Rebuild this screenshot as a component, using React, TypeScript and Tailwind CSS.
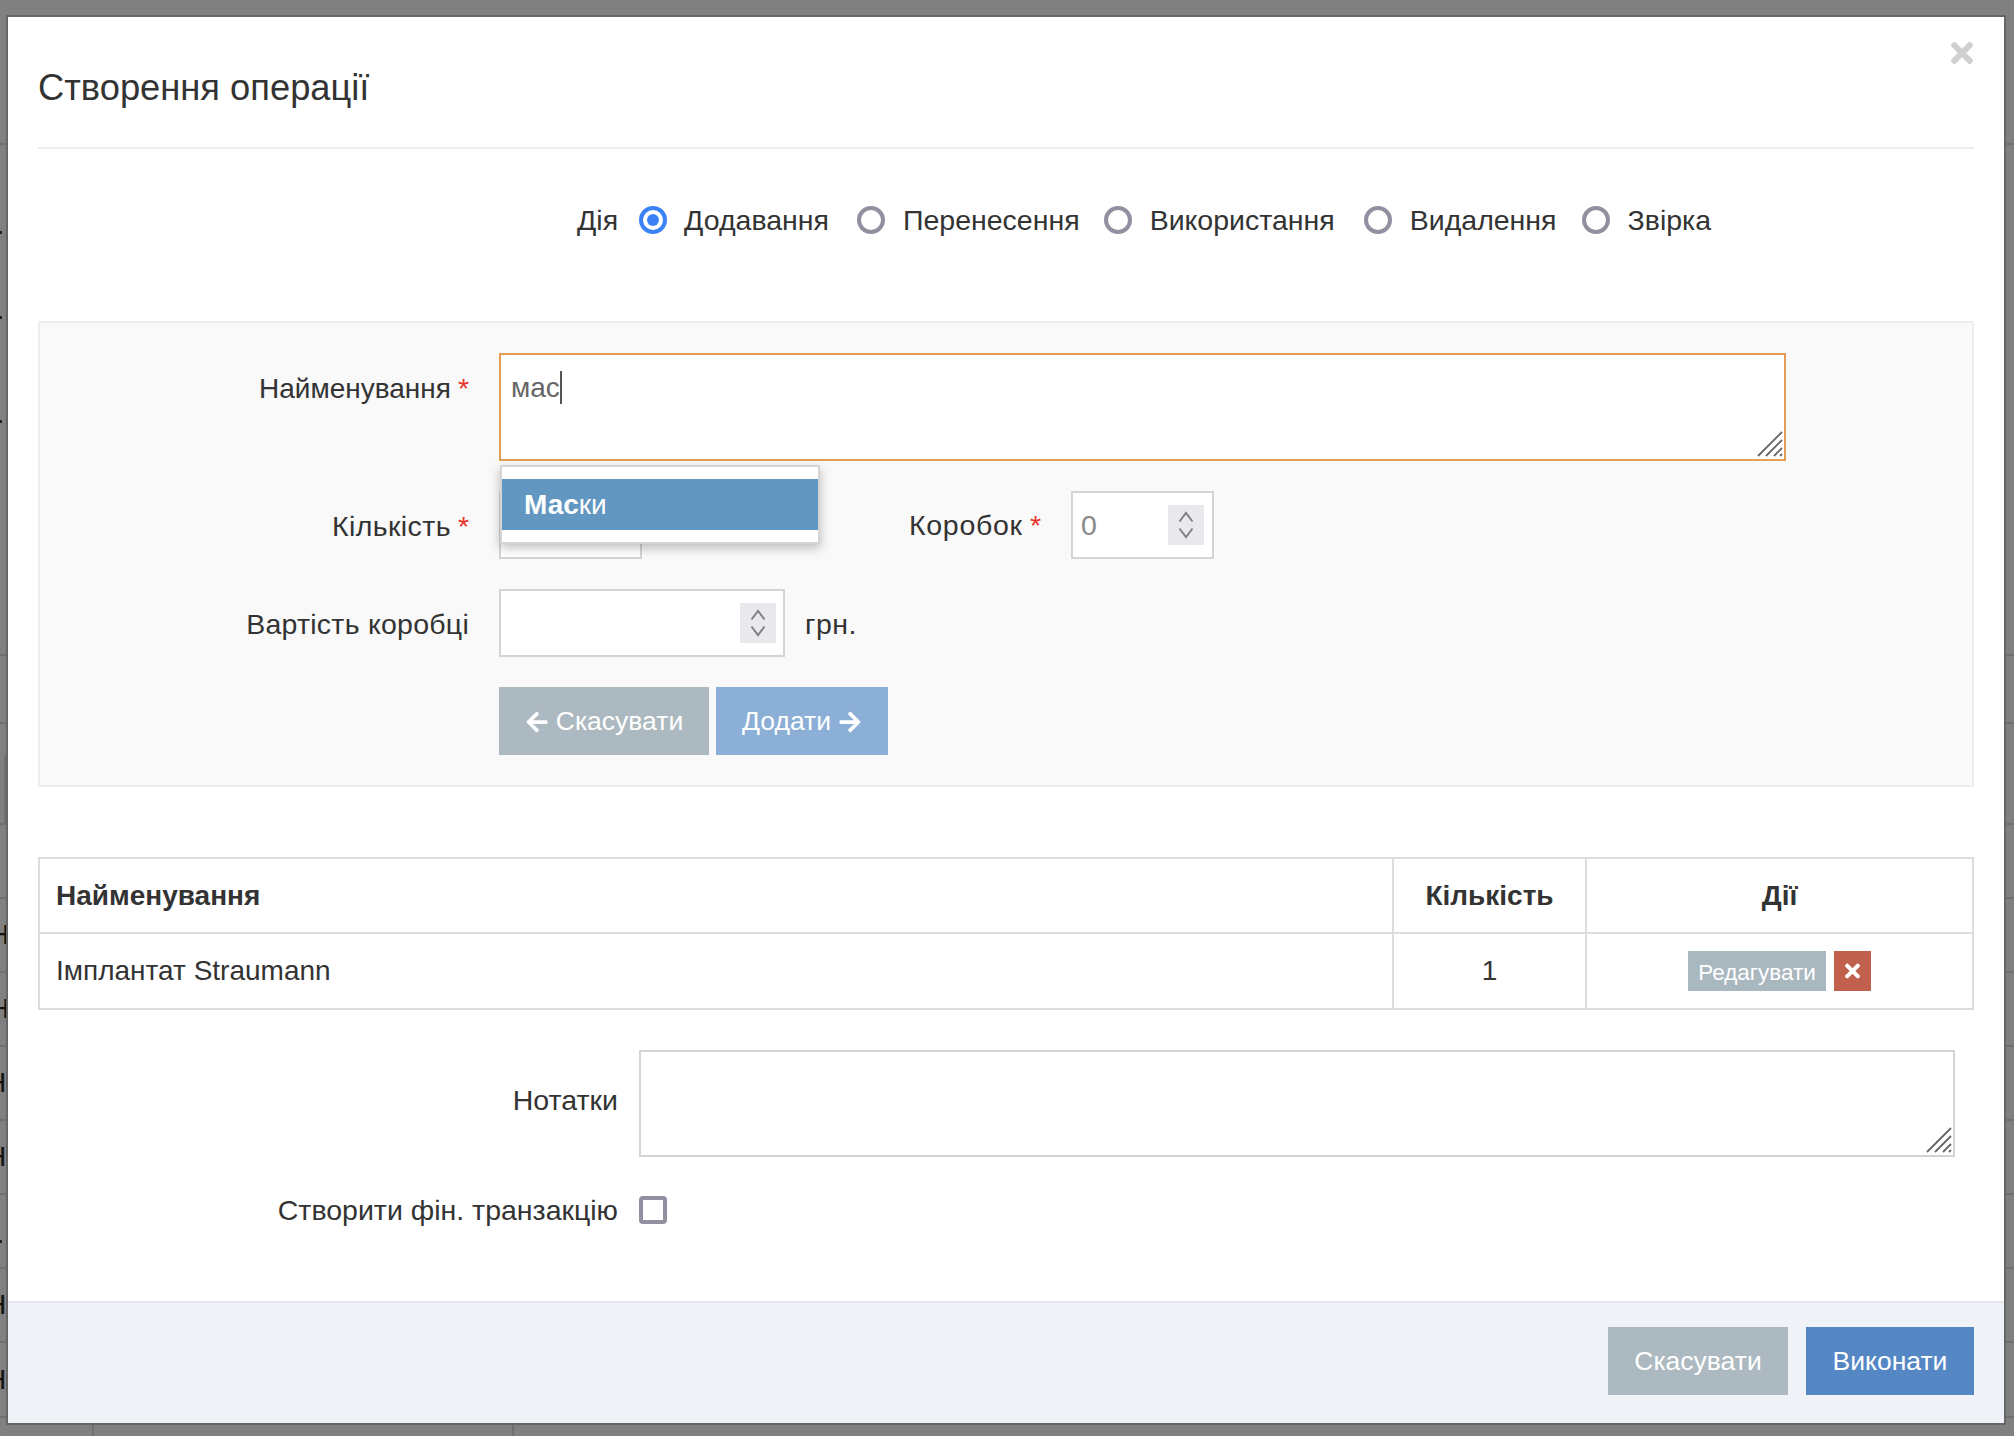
import type { ReactNode } from "react";
import { FaArrowLeft, FaArrowRight, FaTimes } from "react-icons/fa";

const Dot = ({ className }: { className: string }) => <div className={`h-[3px] w-[2px] bg-[#222] ${className}`} />;

const bgRows: { h: string; glyph?: string; extra?: ReactNode }[] = [
  { h: "h-[145px]" },
  {
    h: "h-[511px]",
    extra: (
      <div className="flex flex-col self-start">
        <Dot className="mt-[86px]" />
        <Dot className="mt-[82px]" />
        <Dot className="mt-[101px]" />
      </div>
    ),
  },
  { h: "h-[68px]" },
  { h: "h-[101px]", extra: <div className="mt-auto ml-[4px] h-[68px] w-[4px] self-end border-l-2 border-[#707070]" /> },
  { h: "h-[74px]" },
  { h: "h-[74px]", glyph: "-ml-[11px]" },
  { h: "h-[74px]", glyph: "-ml-[11px]" },
  { h: "h-[74px]", glyph: "-ml-[14px]" },
  { h: "h-[74px]", glyph: "-ml-[14px]" },
  { h: "h-[74px]", extra: <Dot className="mt-[20px]" /> },
  { h: "h-[74px]", glyph: "-ml-[14px]" },
  { h: "h-[75px]", glyph: "-ml-[14px]" },
];

const radios = [
  { label: "Перенесення", ml: "ml-[28px]" },
  { label: "Використання", ml: "ml-[24px]" },
  { label: "Видалення", ml: "ml-[29px]" },
  { label: "Звірка", ml: "ml-[25px]" },
];

function Required() {
  return <span className="ml-[7px] text-[28.5px] text-[#e8352b]">*</span>;
}

function Spinner() {
  return (
    <div className="flex h-[40px] w-[36px] flex-col items-center justify-center gap-[4px] bg-[#e8e8ed]">
      <svg width="16" height="12" viewBox="0 0 16 12" fill="none" stroke="#808088" strokeWidth="2">
        <path d="M1.5 10.5 8 2l6.5 8.5" />
      </svg>
      <svg width="16" height="12" viewBox="0 0 16 12" fill="none" stroke="#808088" strokeWidth="2">
        <path d="M1.5 1.5 8 10l6.5-8.5" />
      </svg>
    </div>
  );
}

function ResizeGrip() {
  return (
    <svg
      className="absolute right-[1px] bottom-[2px]"
      width="26"
      height="26"
      viewBox="0 0 26 26"
      stroke="#666"
      strokeWidth="1.8"
    >
      <path d="M1 25 25 1M9 25 25 9M17 25l8-8M23 25l2-2" />
    </svg>
  );
}

function App() {
  return (
    <div
      className="relative h-[1436px] w-[2014px] overflow-hidden bg-[#808080] text-[28.5px] text-[#333]"
      style={{ fontFamily: '"Liberation Sans", Arial, sans-serif' }}
    >
      {/* page behind the overlay, only slivers show */}
      <div className="flex flex-col">
        {bgRows.map((row, i) => (
          <div key={i} className={`${row.h} flex items-center overflow-hidden border-b-2 border-[#707070]`}>
            {row.glyph && <span className={`${row.glyph} text-[28px] leading-none text-[#111]`}>Н</span>}
            {row.extra}
          </div>
        ))}
        <div className="ml-[92px] h-[18px] w-[422px] border-x-2 border-[#707070]" />
      </div>

      {/* Modal */}
      <div className="absolute top-[15px] left-[6px] flex h-[1410px] w-[2000px] flex-col border-2 border-[#666] bg-white">
        <FaTimes className="absolute top-[20px] right-[31px] h-[32px] w-[22px] text-[#d0d0d0]" />

        <div className="px-[30px]">
          <div className="flex h-[132px] items-center border-b-2 border-[#eee] pt-[12px]">
            <h2 className="text-[36.3px] font-normal text-[#333]">Створення операції</h2>
          </div>

          <div className="mt-[57px] flex h-[28px] items-center pl-[539px]">
            <span>Дія</span>
            <span className="ml-[21px] flex h-[28px] w-[28px] items-center justify-center rounded-full border-[4px] border-[#3b82f6]">
              <span className="h-[12px] w-[12px] rounded-full bg-[#3b82f6]" />
            </span>
            <span className="ml-[17px]">Додавання</span>
            {radios.map((r) => (
              <div key={r.label} className="flex items-center">
                <span className={`${r.ml} h-[28px] w-[28px] rounded-full border-[4px] border-[#9090a0]`} />
                <span className="ml-[18px]">{r.label}</span>
              </div>
            ))}
          </div>

          {/* Form panel */}
          <div className="mt-[87px] flex h-[466px] flex-col gap-[30px] border-2 border-[#eee] bg-[#f9f9f9] pt-[30px]">
            <div className="flex">
              <div className="flex h-[68px] w-[429px] items-center justify-end pt-[3px] text-[28px]">
                <span>Найменування</span>
                <Required />
              </div>
              <div className="relative ml-[30px] h-[108px] w-[1287px] border-2 border-[#e59c55] bg-white pt-[16px] pl-[10px]">
                <div className="flex h-[33px] items-center text-[28px] text-[#666]">
                  мас
                  <span className="h-[33px] w-[2px] bg-[#555]" />
                </div>
                <ResizeGrip />
                <div className="absolute top-[110px] left-[-1px] z-10 w-[320px] border-2 border-[#d4d4d4] bg-white py-[12px] text-[28px] shadow-[0_4px_10px_rgba(0,0,0,0.25)]">
                  <div className="flex h-[51px] items-center bg-[#6197c1] pl-[22px] text-white">
                    <span className="font-bold">Мас</span>
                    <span className="font-medium">ки</span>
                  </div>
                </div>
              </div>
            </div>

            <div className="flex h-[68px]">
              <div className="flex w-[429px] items-center justify-end pt-[2px]">
                <span className="tracking-[0.4px]">Кількість</span>
                <Required />
              </div>
              <div className="ml-[30px] h-[68px] w-[143px] border-2 border-[#d4d4d4] bg-white" />
              <div className="ml-[267px] flex w-[132px] items-center justify-between">
                <span className="tracking-[0.7px]">Коробок</span>
                <span className="text-[#e8352b]">*</span>
              </div>
              <div className="ml-[30px] flex h-[68px] w-[143px] items-center justify-between border-2 border-[#d4d4d4] bg-white pr-[8px] pl-[8px] text-[#888]">
                <span>0</span>
                <Spinner />
              </div>
            </div>

            <div className="flex h-[68px]">
              <div className="flex w-[429px] items-center justify-end pt-[3px] tracking-[0.25px]">Вартість коробці</div>
              <div className="ml-[30px] flex h-[68px] w-[286px] items-center justify-end border-2 border-[#d4d4d4] bg-white pr-[7px]">
                <Spinner />
              </div>
              <div className="ml-[20px] flex items-center pt-[3px] tracking-[0.5px]">грн.</div>
            </div>

            <div className="flex h-[68px] pl-[459px] text-[26.5px] text-white">
              <button className="flex w-[210px] items-center justify-center gap-[7px] bg-[#adb9c0] pt-[2px]">
                <FaArrowLeft className="h-[24px] w-[24px]" />
                Скасувати
              </button>
              <button className="ml-[7px] flex w-[172px] items-center justify-center gap-[7px] bg-[#8bafd6] pt-[2px]">
                Додати
                <FaArrowRight className="h-[24px] w-[24px]" />
              </button>
            </div>
          </div>

          {/* Items table */}
          <table className="mt-[70px] w-[1936px] table-fixed border-collapse border-2 border-[#ddd] text-[28px]">
            <thead>
              <tr className="h-[75px]">
                <th className="w-[1354px] border-2 border-[#ddd] pl-[16px] text-left font-bold">Найменування</th>
                <th className="w-[193px] border-2 border-[#ddd] font-bold">Кількість</th>
                <th className="border-2 border-[#ddd] font-bold">Дії</th>
              </tr>
            </thead>
            <tbody>
              <tr className="h-[76px]">
                <td className="border-2 border-[#ddd] pl-[16px]">Імплантат Straumann</td>
                <td className="border-2 border-[#ddd] text-center">1</td>
                <td className="border-2 border-[#ddd]">
                  <div className="flex items-center justify-center gap-[8px]">
                    <button className="h-[40px] w-[138px] bg-[#a9b7bf] pt-[3px] text-[22.5px] text-white">Редагувати</button>
                    <button className="flex h-[40px] w-[37px] items-center justify-center bg-[#c0604d] text-white">
                      <FaTimes className="h-[22px] w-[15px]" />
                    </button>
                  </div>
                </td>
              </tr>
            </tbody>
          </table>

          {/* Notes */}
          <div className="mt-[40px] flex">
            <div className="flex h-[107px] w-[580px] items-center justify-end pb-[6px]">Нотатки</div>
            <div className="relative ml-[21px] h-[107px] w-[1316px] border-2 border-[#d4d4d4] bg-white">
              <ResizeGrip />
            </div>
          </div>
          <div className="mt-[39px] flex h-[28px] items-center">
            <div className="w-[580px] text-right">Створити фін. транзакцію</div>
            <span className="ml-[21px] h-[28px] w-[28px] rounded-[4px] border-[4px] border-[#9090a0]" />
          </div>
        </div>

        {/* Footer */}
        <div className="mt-auto flex h-[122px] justify-end gap-[18px] border-t-2 border-[#e3e7ec] bg-[#eff2f7] pt-[24px] pr-[30px] text-[26.5px] text-white">
          <button className="h-[68px] w-[180px] bg-[#adb9c0] pt-[2px]">Скасувати</button>
          <button className="h-[68px] w-[168px] bg-[#5487c4] pt-[2px]">Виконати</button>
        </div>
      </div>
    </div>
  );
}

export default App;
